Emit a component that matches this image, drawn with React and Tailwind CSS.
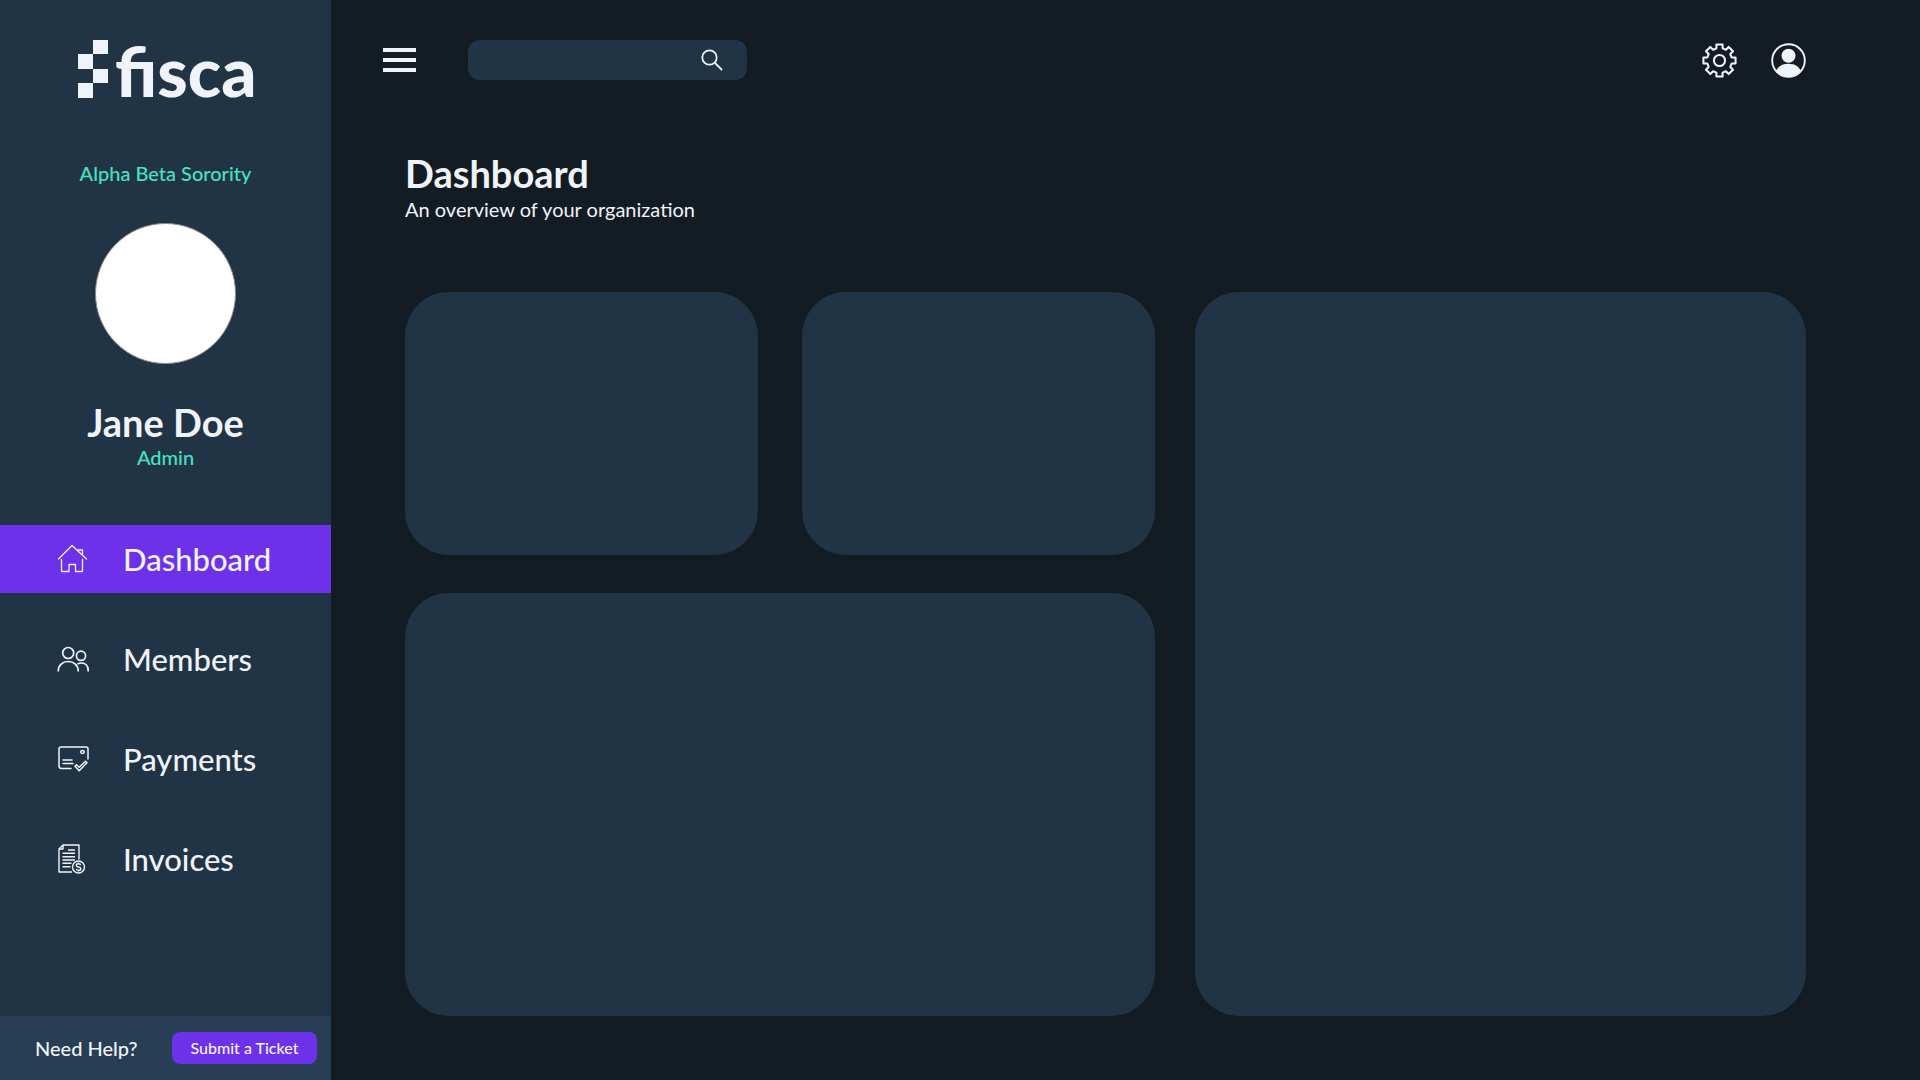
const gearPoints = Array.from({ length: 8 })
  .flatMap((_, k) => {
    const a = (k * Math.PI) / 4;
    return [
      [-3, -11.8],
      [-3, -15.6],
      [3, -15.6],
      [3, -11.8],
    ].map(([x, y]) => {
      const px = 17 + x * Math.cos(a) - y * Math.sin(a);
      const py = 17 + x * Math.sin(a) + y * Math.cos(a);
      return `${px.toFixed(2)},${py.toFixed(2)}`;
    });
  })
  .join(" ");

function Logo() {
  return (
    <svg role="img" aria-label="fisca" viewBox="0 0 176 80" className="h-20 w-44 overflow-visible" fill="currentColor">
      <path d="M15 12h15v14H15zM0 26h15v15H0zM15 41h15v14H15zM0 55h15v15H0z" />
      <text x="37" y="69" fontSize="69" fontWeight="900" fontFamily="Lato, sans-serif">
        fisca
      </text>
    </svg>
  );
}

function HomeIcon() {
  return (
    <svg viewBox="0 0 32 32" className="size-8 shrink-0" fill="none" stroke="currentColor" strokeWidth="1.3" strokeLinecap="round" strokeLinejoin="round" aria-hidden="true">
      <path d="M1.5 16 15 2.5 29.500 16M20.500 7H25.500V12" />
      <path d="M4.500 16.500V28.500H12V21.500H18.500V28.500H25.500V16.500" />
    </svg>
  );
}

function MembersIcon() {
  return (
    <svg viewBox="0 0 32 32" className="size-8 shrink-0" fill="none" stroke="currentColor" strokeWidth="1.7" aria-hidden="true">
      <circle cx="11.200" cy="10" r="5.500" />
      <circle cx="24" cy="12.800" r="4.600" />
      <path d="M1.300 28.500V28C1.300 22.500 5.500 18.500 11.200 18.500S21.200 22.500 21.200 28V28.500" />
      <path d="M20.500 21C22 20.100 23 20 24.500 20 28.500 20 31.200 23 31.200 27.500V28.500" />
    </svg>
  );
}

function PaymentsIcon() {
  return (
    <svg viewBox="0 0 32 32" className="size-8 shrink-0" fill="none" stroke="currentColor" strokeWidth="1.5" strokeLinecap="round" strokeLinejoin="round" aria-hidden="true">
      <path d="M14 25.500H4.500Q2 25.500 2 23V6Q2 4 4 4H29Q31 4 31 6V16" />
      <ellipse cx="25.500" cy="9" rx="1.800" ry="1.400" />
      <path d="M6 17H15M6 20.500H16" />
      <path d="M18 23.300 19.500 21.800 22.200 24.300 28.500 18.300 30 19.800 22.200 27.800Z" />
    </svg>
  );
}

function InvoicesIcon() {
  return (
    <svg viewBox="0 0 32 32" className="size-8 shrink-0" fill="none" stroke="currentColor" strokeWidth="1.4" strokeLinejoin="round" aria-hidden="true">
      <path d="M15 29H2V6L6 2H22V16.500M2 6H6V2" />
      <path d="M11 7H18M5.500 10.300H18M5.500 13.700H18M5.500 17H18M5.500 20.300H14.500M5.500 23.700H13.500" />
      <circle cx="21.500" cy="24" r="6" />
      <path d="M23.800 22.100C23.500 21.200 22.700 20.800 21.500 20.800 20.200 20.800 19.300 21.400 19.300 22.400 19.300 24.700 23.900 23.400 23.900 25.700 23.900 26.800 22.900 27.300 21.500 27.300 20.200 27.300 19.300 26.700 19.100 25.800M21.500 19.500V20.800M21.500 27.300V28.500" />
    </svg>
  );
}

const navItems = [
  { label: "Dashboard", Icon: HomeIcon, active: true },
  { label: "Members", Icon: MembersIcon },
  { label: "Payments", Icon: PaymentsIcon },
  { label: "Invoices", Icon: InvoicesIcon },
];

function Sidebar() {
  return (
    <aside className="flex w-[331px] shrink-0 flex-col bg-[#213445]">
      <div className="flex flex-col items-center pt-7">
        <Logo />
        <p className="mt-[51px] text-xl leading-7 font-medium text-[#45e3c0]">Alpha Beta Sorority</p>
        <div className="mt-9 size-[141px] rounded-full border border-[#8b8b8b] bg-white" />
        <h2 className="mt-[34px] text-[38px] leading-[48px] font-bold">Jane Doe</h2>
        <p className="text-xl leading-[22px] font-medium text-[#45e3c0]">Admin</p>
      </div>
      <nav className="mt-[57px] flex flex-col gap-8">
        {navItems.map(({ label, Icon, active }) => (
          <a
            key={label}
            href="#"
            aria-current={active ? "page" : undefined}
            className={`flex h-[68px] items-center gap-[34px] pl-[57px] text-[31px] leading-9 font-medium ${active ? "bg-[#6d31ea]" : ""}`}
          >
            <Icon />
            {label}
          </a>
        ))}
      </nav>
      <div className="mt-auto flex h-16 items-center justify-between bg-[#283e55] pr-[14px] pl-[35px]">
        <span className="text-xl leading-6 font-medium">Need Help?</span>
        <button type="button" className="h-8 w-[145px] rounded-lg bg-[#6d31ea] text-base font-medium">
          Submit a Ticket
        </button>
      </div>
    </aside>
  );
}

function TopBar() {
  return (
    <header className="flex h-[120px] items-center pr-[114px] pl-[52px]">
      <button type="button" aria-label="Menu" className="flex w-[33px] flex-col gap-[6px]">
        <span className="h-1 bg-current" />
        <span className="h-1 bg-current" />
        <span className="h-1 bg-current" />
      </button>
      <form role="search" className="ml-[52px] flex h-10 w-[279px] items-center rounded-xl bg-[#213445] pr-6">
        <input type="search" aria-label="Search" className="h-full min-w-0 flex-1 bg-transparent pl-4 text-base outline-none" />
        <button type="button" aria-label="Search">
          <svg viewBox="0 0 22 22" className="size-[22px]" fill="none" stroke="currentColor" strokeWidth="1.8" aria-hidden="true">
            <circle cx="8.500" cy="8.500" r="7.200" />
            <path d="M13.500 13.500 21 21" />
          </svg>
        </button>
      </form>
      <div className="ml-auto flex items-center gap-[34px]">
        <button type="button" aria-label="Settings">
          <svg viewBox="0 0 34 34" className="size-[35px]" fill="none" stroke="currentColor" strokeWidth="2" strokeLinejoin="round" aria-hidden="true">
            <polygon points={gearPoints} />
            <circle cx="17" cy="17" r="5.400" />
          </svg>
        </button>
        <button type="button" aria-label="Account">
          <svg viewBox="0 0 35 35" className="size-[35px]" aria-hidden="true">
            <circle cx="17.500" cy="17.500" r="16.300" fill="none" stroke="currentColor" strokeWidth="1.900" />
            <circle cx="17.500" cy="12.800" r="7" fill="currentColor" />
            <path d="M5.200 28C7 23.500 11 20.700 17.500 20.700S28 23.500 29.800 28C27 31.500 22.500 34 17.500 34S8 31.500 5.200 28Z" fill="currentColor" />
          </svg>
        </button>
      </div>
    </header>
  );
}

export default function App() {
  return (
    <div className="flex min-h-screen bg-[#141c23] font-['Lato',sans-serif] text-[#f0f3fa]">
      <Sidebar />
      <div className="flex min-w-0 flex-1 flex-col">
        <TopBar />
        <main className="flex flex-1 flex-col pt-[29px] pr-[114px] pb-16 pl-[74px]">
          <h1 className="text-[38px] leading-[48px] font-bold">Dashboard</h1>
          <p className="text-xl leading-6">An overview of your organization</p>
          <div className="mt-[71px] grid flex-1 grid-cols-[750fr_611fr] gap-10">
            <div className="grid grid-cols-2 grid-rows-[263fr_423fr] gap-x-11 gap-y-[38px]">
              <section className="rounded-[44px] bg-[#213445]" />
              <section className="rounded-[44px] bg-[#213445]" />
              <section className="col-span-2 rounded-[44px] bg-[#213445]" />
            </div>
            <section className="rounded-[44px] bg-[#213445]" />
          </div>
        </main>
      </div>
    </div>
  );
}
